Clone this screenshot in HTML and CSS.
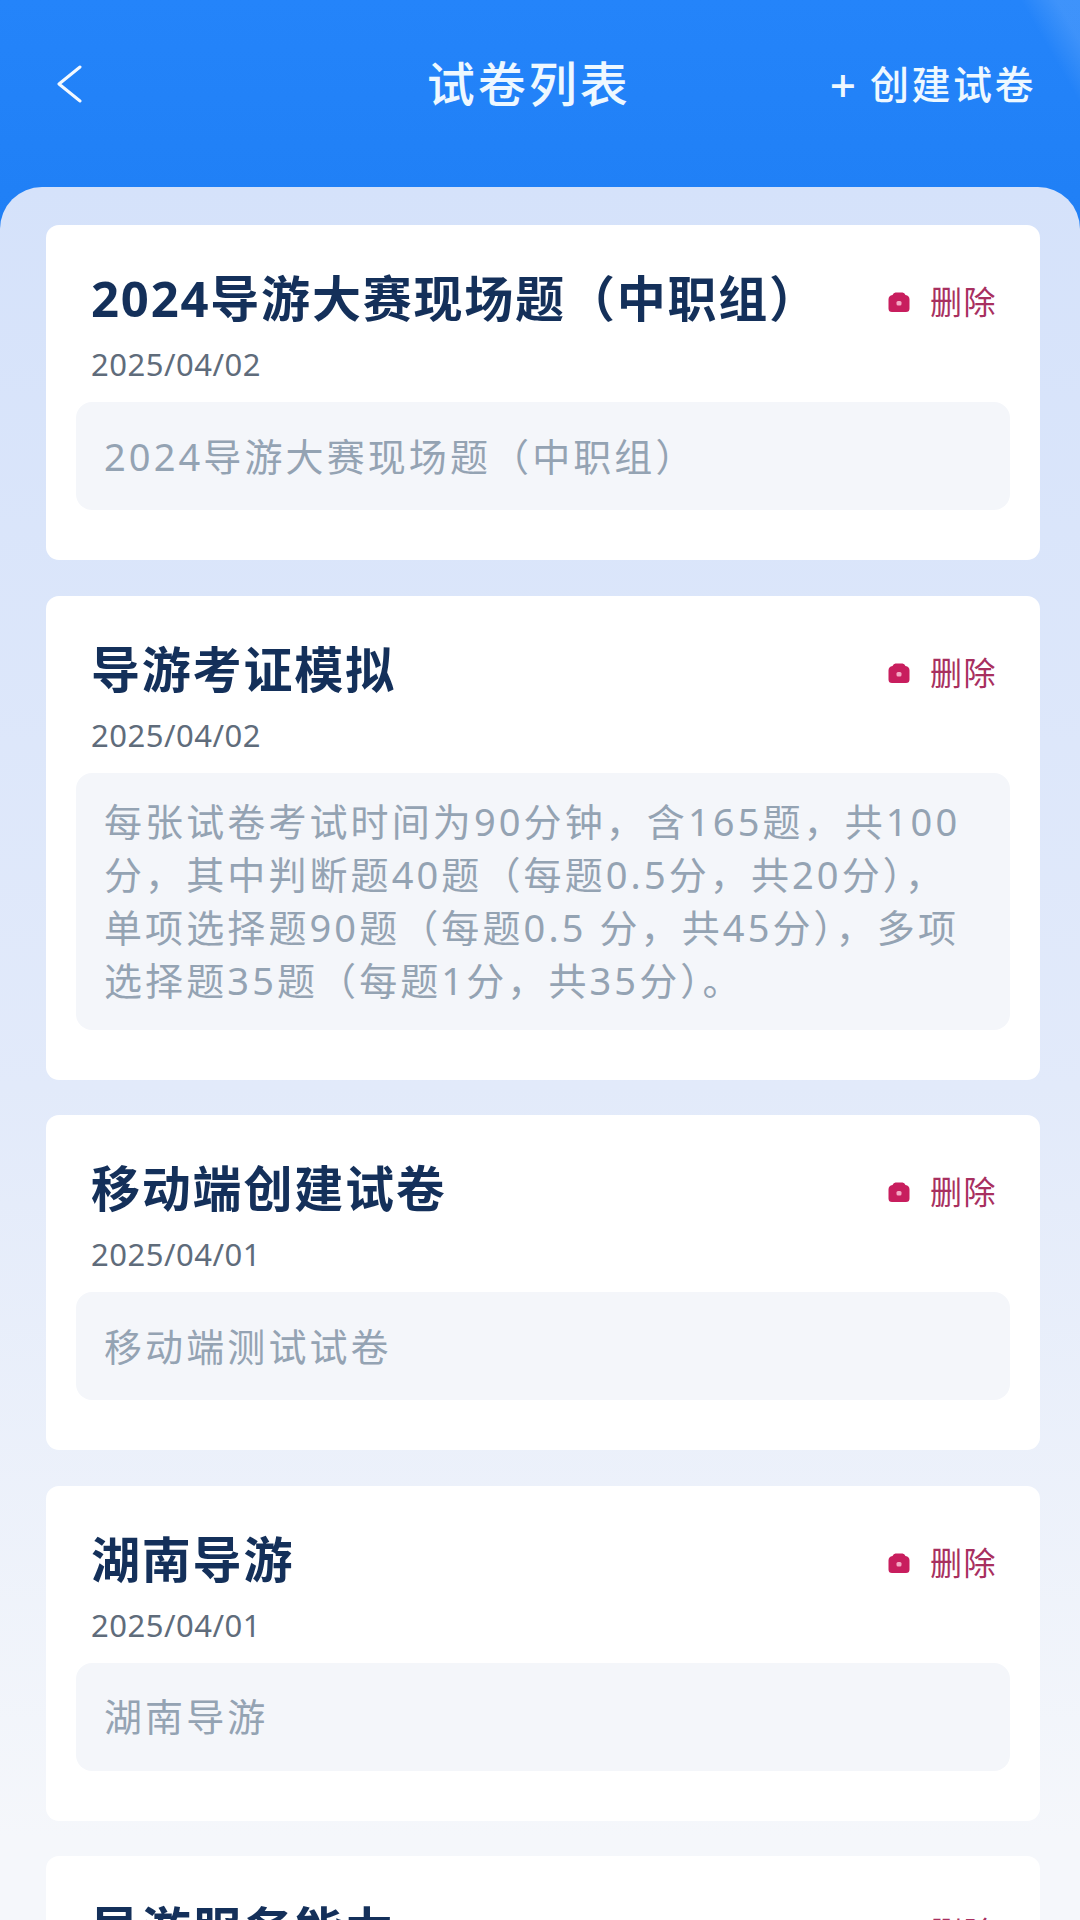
FILE: index.html
```html
<!DOCTYPE html>
<html lang="zh-CN">
<head>
<meta charset="utf-8">
<title>试卷列表</title>
<link rel="stylesheet" href="styles.css">
</head>
<body>
<div class="page">
  <header class="topbar">
    <svg class="back" viewBox="0 0 26 38" aria-hidden="true"><path d="M24 2 L3 19 L24 36"/></svg>
    <h1 class="page-title">试卷列表</h1>
    <div class="create"><span class="plus">+</span><span>创建试卷</span></div>
  </header>
  <main class="sheet">
    <article class="card">
      <div class="card-head">
        <h2 class="card-title">2024导游大赛现场题（中职组）</h2>
        <div class="delete"><svg class="bag" viewBox="0 0 22 20" aria-hidden="true"><path d="M7.5 0.5 L14.5 0.5 Q16.5 0.5 17.5 3 Q21.5 3.5 21.5 7.5 L21.5 16.5 Q21.5 20 18 20 L4 20 Q0.5 20 0.5 16.5 L0.5 7.5 Q0.5 3.5 4.5 3 Q5.5 0.5 7.5 0.5 Z"/><rect class="bag-dot" x="8.5" y="9" width="5" height="4.5" rx="1.5"/></svg><span>删除</span></div>
      </div>
      <time class="card-date">2025/04/02</time>
      <p class="card-desc"><span>2024导游大赛现场题（中职组）</span></p>
    </article>
    <article class="card">
      <div class="card-head">
        <h2 class="card-title">导游考证模拟</h2>
        <div class="delete"><svg class="bag" viewBox="0 0 22 20" aria-hidden="true"><path d="M7.5 0.5 L14.5 0.5 Q16.5 0.5 17.5 3 Q21.5 3.5 21.5 7.5 L21.5 16.5 Q21.5 20 18 20 L4 20 Q0.5 20 0.5 16.5 L0.5 7.5 Q0.5 3.5 4.5 3 Q5.5 0.5 7.5 0.5 Z"/><rect class="bag-dot" x="8.5" y="9" width="5" height="4.5" rx="1.5"/></svg><span>删除</span></div>
      </div>
      <time class="card-date">2025/04/02</time>
      <p class="card-desc"><span>每张试卷考试时间为90分钟，含165题，共100<br>分，其中判断题40题（每题0.5分，共20分），<br>单项选择题90题（每题0.5 分，共45分），多项<br>选择题35题（每题1分，共35分）。</span></p>
    </article>
    <article class="card">
      <div class="card-head">
        <h2 class="card-title">移动端创建试卷</h2>
        <div class="delete"><svg class="bag" viewBox="0 0 22 20" aria-hidden="true"><path d="M7.5 0.5 L14.5 0.5 Q16.5 0.5 17.5 3 Q21.5 3.5 21.5 7.5 L21.5 16.5 Q21.5 20 18 20 L4 20 Q0.5 20 0.5 16.5 L0.5 7.5 Q0.5 3.5 4.5 3 Q5.5 0.5 7.5 0.5 Z"/><rect class="bag-dot" x="8.5" y="9" width="5" height="4.5" rx="1.5"/></svg><span>删除</span></div>
      </div>
      <time class="card-date">2025/04/01</time>
      <p class="card-desc"><span>移动端测试试卷</span></p>
    </article>
    <article class="card">
      <div class="card-head">
        <h2 class="card-title">湖南导游</h2>
        <div class="delete"><svg class="bag" viewBox="0 0 22 20" aria-hidden="true"><path d="M7.5 0.5 L14.5 0.5 Q16.5 0.5 17.5 3 Q21.5 3.5 21.5 7.5 L21.5 16.5 Q21.5 20 18 20 L4 20 Q0.5 20 0.5 16.5 L0.5 7.5 Q0.5 3.5 4.5 3 Q5.5 0.5 7.5 0.5 Z"/><rect class="bag-dot" x="8.5" y="9" width="5" height="4.5" rx="1.5"/></svg><span>删除</span></div>
      </div>
      <time class="card-date">2025/04/01</time>
      <p class="card-desc"><span>湖南导游</span></p>
    </article>
    <article class="card">
      <div class="card-head">
        <h2 class="card-title">导游服务能力</h2>
        <div class="delete"><svg class="bag" viewBox="0 0 22 20" aria-hidden="true"><path d="M7.5 0.5 L14.5 0.5 Q16.5 0.5 17.5 3 Q21.5 3.5 21.5 7.5 L21.5 16.5 Q21.5 20 18 20 L4 20 Q0.5 20 0.5 16.5 L0.5 7.5 Q0.5 3.5 4.5 3 Q5.5 0.5 7.5 0.5 Z"/><rect class="bag-dot" x="8.5" y="9" width="5" height="4.5" rx="1.5"/></svg><span>删除</span></div>
      </div>
    </article>
  </main>
</div>
</body>
</html>
```
FILE: styles.css
```css
* { box-sizing: border-box; margin: 0; padding: 0; }
html, body { width: 1080px; height: 1920px; overflow: hidden; }
body { font-family: "Noto Sans", "Noto Sans CJK SC", sans-serif; }
.page {
  width: 1080px;
  height: 1920px;
  overflow: hidden;
  display: flex;
  flex-direction: column;
  background:
    linear-gradient(60deg, rgba(255,255,255,0) 95%, rgba(255,255,255,0.12) 98%) 0 0 / 100% 200px no-repeat,
    linear-gradient(180deg, #2484fa 0, #1f7ff5 240px);
}
.topbar {
  flex: none;
  height: 187px;
  padding: 0 44px 19px 56px;
  display: flex;
  align-items: center;
  justify-content: space-between;
  color: #eef8ff;
}
.back { width: 26px; height: 38px; fill: none; stroke: #f4f9ff; stroke-width: 3; stroke-linecap: round; stroke-linejoin: round; }
.page-title { font-size: 48px; font-weight: 500; letter-spacing: 3px; margin-left: 146px; line-height: 60px; }
.create { display: flex; align-items: center; gap: 14px; font-size: 39px; font-weight: 500; letter-spacing: 2.5px; line-height: 50px; }
.plus { font-family: "Noto Sans", sans-serif; font-size: 46px; letter-spacing: 0; font-weight: 500; }
.sheet {
  flex: 1;
  min-height: 0;
  padding: 38px 40px 0 46px;
  display: flex;
  flex-direction: column;
  gap: 35.5px;
  overflow: hidden;
  border-radius: 42px 42px 0 0;
  background: linear-gradient(180deg, #d5e2fa 0, #e2eafa 900px, #f5f7fb 1650px);
}
.card {
  flex: none;
  background: #fff;
  border-radius: 13px;
  padding: 41px 30px 50px;
}
.card-head {
  padding: 0 15px;
  height: 64px;
  display: flex;
  align-items: center;
  justify-content: space-between;
}
.card-title { font-size: 49px; font-weight: 700; letter-spacing: 1.8px; color: #14305a; line-height: 64px; white-space: nowrap; }
.delete { display: flex; align-items: center; gap: 20px; font-size: 32px; letter-spacing: 1.5px; color: #a8305f; line-height: 40px; margin: 8px -2px 0 0; }
.bag { width: 22px; height: 20px; fill: #c81e5e; }
.bag-dot { fill: #f3a9c4; }
.card-date { display: block; margin: 16px 15px 0; font-size: 31px; line-height: 36px; letter-spacing: 0.5px; color: #5f6c7b; }
.card-desc {
  margin-top: 20px;
  min-height: 108px;
  padding: 22.5px 28px;
  display: flex;
  align-items: center;
  background: #f4f6fa;
  border-radius: 16px;
  font-size: 38px;
  line-height: 53px;
  letter-spacing: 3.1px;
  color: #94a3b3;
  white-space: nowrap;
}
```
